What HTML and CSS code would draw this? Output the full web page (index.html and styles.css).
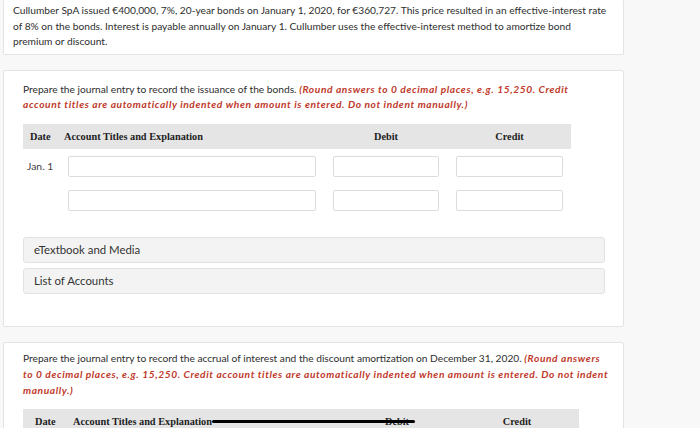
FILE: index.html
```html
<!DOCTYPE html>
<html lang="en">
<head>
<meta charset="utf-8">
<title>Bonds journal entries</title>
<link rel="stylesheet" href="styles.css">
</head>
<body>
<main class="page">
  <section class="card card-intro">
    <p class="text">Cullumber SpA issued €400,000, 7%, 20-year bonds on January 1, 2020, for €360,727. This price resulted in an effective-interest rate<br>of 8% on the bonds. Interest is payable annually on January 1. Cullumber uses the effective-interest method to amortize bond<br>premium or discount.</p>
  </section>

  <section class="card card-part">
    <p class="text">Prepare the journal entry to record the issuance of the bonds. <em class="note">(Round answers to 0 decimal places, e.g. 15,250. Credit<br>account titles are automatically indented when amount is entered. Do not indent manually.)</em></p>

    <div class="journal">
      <div class="jhead">
        <div class="jh-date">Date</div>
        <div class="jh-acct">Account Titles and Explanation</div>
        <div class="jh-debit">Debit</div>
        <div class="jh-credit">Credit</div>
      </div>
      <div class="jrow">
        <div class="jdate">Jan. 1</div>
        <div class="field"></div>
        <div class="field"></div>
        <div class="field"></div>
      </div>
      <div class="jrow">
        <div class="jdate"></div>
        <div class="field"></div>
        <div class="field"></div>
        <div class="field"></div>
      </div>
    </div>

    <div class="resources">
      <div class="resource">eTextbook and Media</div>
      <div class="resource">List of Accounts</div>
    </div>
  </section>

  <section class="card card-part card-last">
    <p class="text">Prepare the journal entry to record the accrual of interest and the discount amortization on December 31, 2020. <em class="note">(Round answers<br>to 0 decimal places, e.g. 15,250. Credit account titles are automatically indented when amount is entered. Do not indent<br>manually.)</em></p>

    <div class="journal">
      <div class="jhead jhead-wide">
        <div class="jh-date">Date</div>
        <div class="jh-acct">Account Titles and Explanation</div>
        <div class="jh-debit">Debit</div>
        <div class="jh-credit">Credit</div>
        <div class="scribble"></div>
      </div>
    </div>
  </section>
</main>
</body>
</html>
```

FILE: styles.css
```css
* { box-sizing: border-box; }

html, body {
  margin: 0;
  padding: 0;
  background: #f8f8f8;
  height: 100%;
  overflow: hidden;
}

.page {
  width: 624px;
  padding-left: 3px;
  display: flex;
  flex-direction: column;
  gap: 15px;
  font-family: "Lato", "Liberation Sans", sans-serif;
  color: #333;
}

.card {
  background: #fff;
  border: 1px solid #e3e3e3;
  border-radius: 2px;
}

.card-intro {
  border-top-width: 0;
  padding: 3px 6px 4px 9px;
}

.card-part {
  padding: 11px 18px 32px 19px;
}

.card-last {
  margin-top: 0;
  padding-top: 7px;
  padding-right: 6px;
}

.text {
  margin: 0;
  font-size: 10.2px;
  line-height: 15.5px;
  white-space: nowrap;
  color: #2e2e2e;
}

.card-last .text { line-height: 16px; }

.note {
  color: #c0392b;
  font-weight: 700;
  font-style: italic;
  letter-spacing: 0.6px;
}

.journal {
  margin-top: 11px;
}

.jhead {
  position: relative;
  width: 548px;
  height: 25px;
  background: #e5e5e5;
  display: grid;
  grid-template-columns: 41px 269px 123px 115px;
  align-items: center;
  font-family: "Liberation Serif", "Times New Roman", serif;
  font-weight: 700;
  font-size: 10.3px;
  color: #1e1e1e;
}

.jh-date { padding-left: 7px; }
.jh-debit { text-align: center; padding-right: 17px; }
.jh-credit { text-align: center; padding-right: 8px; }

.jhead-wide {
  width: 556px;
  grid-template-columns: 50px 272px 104px 130px;
}
.jhead-wide .jh-date { padding-left: 12px; }
.jhead-wide .jh-debit { padding-right: 0; }
.jhead-wide .jh-credit { padding-right: 0; padding-left: 6px; }

.scribble {
  position: absolute;
  left: 189px;
  top: 11px;
  width: 203px;
  height: 3px;
  background: #000;
  border-radius: 2px;
}

.jrow {
  display: grid;
  grid-template-columns: 28px 248px 106px 107px;
  column-gap: 17px;
  align-items: center;
  margin-top: 7px;
}
.jrow + .jrow { margin-top: 13px; }

.jdate {
  font-size: 10.4px;
  padding-left: 4px;
  white-space: nowrap;
  color: #444;
}

.field {
  height: 21px;
  background: #fff;
  border: 1px solid #dcdcdc;
  border-radius: 2px;
}

.resources {
  margin-top: 26px;
  display: flex;
  flex-direction: column;
  gap: 5px;
}

.resource {
  height: 26px;
  display: flex;
  align-items: center;
  padding-left: 10px;
  background: #f3f3f3;
  border: 1px solid #e2e2e2;
  border-radius: 3px;
  font-size: 11.4px;
  color: #333;
}
```
